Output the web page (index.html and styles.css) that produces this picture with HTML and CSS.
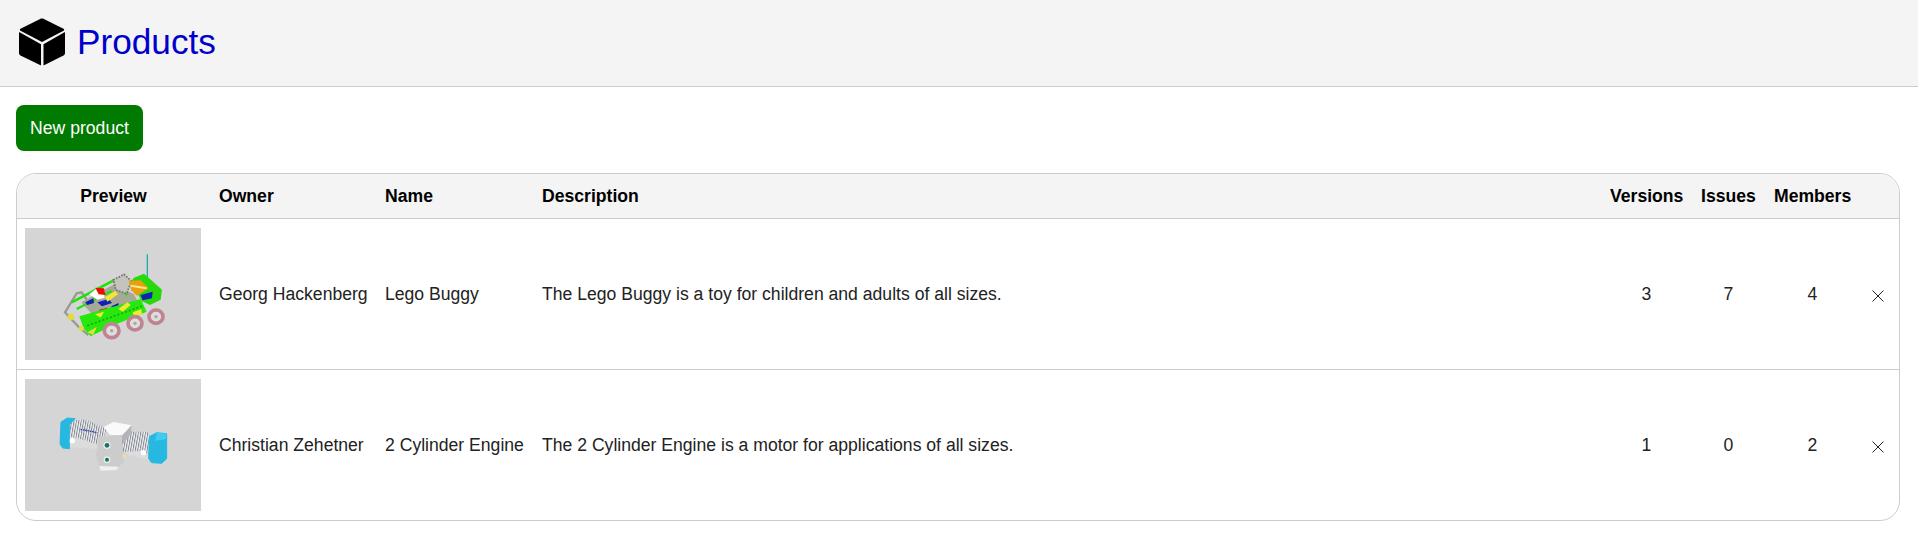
FILE: index.html
```html
<!DOCTYPE html>
<html lang="en">
<head>
<meta charset="utf-8">
<title>Products</title>
<link rel="stylesheet" href="styles.css">
</head>
<body>
<svg class="defs" width="0" height="0" aria-hidden="true">
  <defs>
    <filter id="soft" x="-5%" y="-5%" width="110%" height="110%"><feGaussianBlur stdDeviation="1.5"/></filter>
    <pattern id="coil" width="7" height="7" patternUnits="userSpaceOnUse" patternTransform="rotate(10)">
      <rect width="7" height="7" fill="#f2f3f5"/>
      <rect width="3" height="7" fill="#7e838e"/>
    </pattern>
  </defs>
</svg>
<header class="top">
  <svg class="cube" viewBox="0 0 46 48">
    <path d="M21.600.8 1.500 10.800c-.9.5-.9 1.500 0 2L23 24l21.500-11.200c.9-.5.9-1.500 0-2L24.400.8c-.9-.4-1.900-.4-2.800 0Z"/>
    <path d="M0 14.700V35c0 1.100.6 2 1.500 2.500l20 9.800c.3.100.5 0 .5-.3V26.300L.6 14.300c-.3-.1-.6 0-.6.400Z"/>
    <path d="M46 14.700V35c0 1.100-.6 2-1.500 2.500l-19.500 9.800c-.3.100-.5 0-.5-.3V26.300l21-12c.3-.1.500 0 .5.400Z"/>
  </svg>
  <h1 class="title">Products</h1>
</header>
<main class="content">
  <button class="primary" type="button">New product</button>
  <div class="panel">
    <table class="grid">
      <thead>
        <tr>
          <th class="c-preview center">Preview</th>
          <th class="c-owner">Owner</th>
          <th class="c-name">Name</th>
          <th>Description</th>
          <th class="c-versions center">Versions</th>
          <th class="c-issues center">Issues</th>
          <th class="c-members center">Members</th>
          <th class="c-del"></th>
        </tr>
      </thead>
      <tbody>
        <tr>
          <td class="c-preview">
            <svg class="thumb" viewBox="45 39 528 396">
              <rect x="45" y="39" width="528" height="396" fill="#d5d5d5"/>
              <g filter="url(#soft)">
                <path d="M412 118V195" stroke="#28a8b0" stroke-width="4" fill="none"/>
                <path d="M165 292 200 235 215 232 255 290 232 358 205 335Z" fill="none" stroke="#9a9a92" stroke-width="7"/>
                <path d="M214 262 312 208 372 238 395 285 262 316Z" fill="#a8a898"/>
                <path d="M185 262 310 197 352 240" fill="none" stroke="#20e010" stroke-width="8"/>
                <path d="M200 282 305 228" fill="none" stroke="#20e010" stroke-width="6"/>
                <path d="M310 195 342 178 364 198 350 236 318 225Z" fill="#c4c4bc" stroke="#70706a" stroke-width="5" stroke-dasharray="5 4"/>
                <path d="M372 188 402 176 456 224 452 254 420 270 395 258 362 200Z" fill="#28d810"/>
                <path d="M356 197 392 196 416 220 380 242 364 226Z" fill="#e8a010"/>
                <path d="M362 212 410 220" stroke="#f8e890" stroke-width="6"/>
                <path d="M392 240 428 230 426 250 398 256Z" fill="#1020b0"/>
                <path d="M238 238 258 222 282 226 284 248 262 254Z" fill="#fff"/>
                <path d="M256 218 282 220 286 240 266 238Z" fill="#f01000"/>
                <path d="M226 262 250 250 252 264 232 270Z" fill="#0820b8"/>
                <path d="M262 262 296 252 306 264 276 274Z" fill="#0820b8"/>
                <path d="M304 274 326 264 324 282 310 284Z" fill="#0820b8"/>
                <path d="M285 246 316 228 324 238 292 260Z" fill="#f0e830"/>
                <path d="M268 284 292 278 288 300 262 308Z" fill="#c03010"/>
                <path d="M208 304 392 252 410 290 300 335 242 364 222 342Z" fill="#28e810"/>
                <path d="M232 332 400 272" stroke="#18a810" stroke-width="5" stroke-dasharray="6 6"/>
                <path d="M325 282 352 262 362 270 338 290Z" fill="#f0e830"/>
                <path d="M368 292 394 282 396 298 372 304Z" fill="#f0e830"/>
                <circle cx="183" cy="306" r="10" fill="#e0dc40"/>
                <circle cx="214" cy="340" r="8" fill="#e0dc40"/>
                <path d="M232 352 260 336 250 360Z" fill="#e0dc40"/>
                <path d="M255 298 282 290 272 308Z" fill="#f0e830"/>
                <g fill="#e0dcdc" stroke="#c08490" stroke-width="11">
                  <ellipse cx="305" cy="347" rx="22" ry="21"/>
                  <ellipse cx="375" cy="325" rx="21" ry="20"/>
                  <ellipse cx="438" cy="305" rx="21" ry="20"/>
                </g>
                <g fill="#a0a8a8">
                  <circle cx="305" cy="347" r="5"/>
                  <circle cx="375" cy="325" r="5"/>
                  <circle cx="438" cy="305" r="5"/>
                </g>
              </g>
            </svg>
          </td>
          <td>Georg Hackenberg</td>
          <td>Lego Buggy</td>
          <td>The Lego Buggy is a toy for children and adults of all sizes.</td>
          <td class="center">3</td>
          <td class="center">7</td>
          <td class="center">4</td>
          <td class="c-del">
            <svg class="close" viewBox="0 0 12 12"><path d="M.5.500l11 11M11.500.500l-11 11"/></svg>
          </td>
        </tr>
        <tr>
          <td class="c-preview">
            <svg class="thumb" viewBox="45 41 528 396">
              <rect x="45" y="41" width="528" height="396" fill="#d5d5d5"/>
              <g filter="url(#soft)">
                <path d="M172 168 225 162 290 190 270 250 178 244Z" fill="url(#coil)"/>
                <path d="M325 198 418 200 418 274 330 262Z" fill="url(#coil)"/>
                <path d="M212 192 262 202" stroke="#1828a8" stroke-width="4" stroke-dasharray="4 3"/>
                <path d="M175 212 215 222 268 240 268 252 178 246Z" fill="#dcdcdc"/>
                <path d="M340 260 400 256 418 270 416 284 355 270Z" fill="#dcdcdc"/>
                <path d="M153 170 172 158 195 160 178 178 178 250 158 248 150 236Z" fill="#28b8e0" stroke="#28b8e0" stroke-width="3" stroke-linejoin="round"/>
                <path d="M418 214 440 202 470 205 470 280 455 294 425 292 416 280Z" fill="#28b8e0" stroke="#28b8e0" stroke-width="3" stroke-linejoin="round"/>
                <path d="M440 202 470 205 468 222 436 226Z" fill="#40ccf0"/>
                <path d="M280 186 310 170 365 180 335 212 300 208Z" fill="#fafafa"/>
                <path d="M335 212 365 180 362 205 340 235Z" fill="#b4b4b4"/>
                <path d="M265 215 335 208 342 290 320 312 272 314 258 270Z" fill="#cccccc"/>
                <path d="M272 316 320 314 326 304 268 302Z" fill="#f0f0f0"/>
                <circle cx="291" cy="240" r="11" fill="#ececec"/>
                <circle cx="291" cy="240" r="7" fill="#107868"/>
                <circle cx="291" cy="283" r="10" fill="#ececec"/>
                <circle cx="291" cy="283" r="6" fill="#107868"/>
                <circle cx="187" cy="226" r="8" fill="#fff"/>
                <circle cx="400" cy="262" r="8" fill="#fff"/>
                <circle cx="342" cy="272" r="6" fill="#e8dca0"/>
              </g>
            </svg>
          </td>
          <td>Christian Zehetner</td>
          <td>2 Cylinder Engine</td>
          <td>The 2 Cylinder Engine is a motor for applications of all sizes.</td>
          <td class="center">1</td>
          <td class="center">0</td>
          <td class="center">2</td>
          <td class="c-del">
            <svg class="close" viewBox="0 0 12 12"><path d="M.5.500l11 11M11.500.500l-11 11"/></svg>
          </td>
        </tr>
      </tbody>
    </table>
  </div>
</main>
</body>
</html>
```
FILE: styles.css
```css
* { box-sizing: border-box; }
html, body { margin: 0; padding: 0; background: #fff; }
body { font-family: "Liberation Sans", Arial, sans-serif; font-size: 17.6px; color: #222; }
.defs { position: absolute; }

.top {
  display: flex;
  align-items: center;
  gap: 12px;
  height: 87px;
  padding: 0 19px 2px;
  background: #f4f4f4;
  border-bottom: 1px solid #ccc;
}
.cube { width: 46px; height: 48px; fill: #000; flex: none; }
.title { margin: 0; font-size: 35.2px; font-weight: 400; color: #0000cc; }

.content { padding: 18px 0 0 16px; }
.primary {
  display: block;
  width: 127px;
  height: 46px;
  padding: 0;
  border: 0;
  border-radius: 8px;
  background: #007a00;
  color: #fff;
  font: 17.6px "Liberation Sans", Arial, sans-serif;
}

.panel {
  width: 1884px;
  margin-top: 22px;
  border: 1px solid #ccc;
  border-radius: 20px;
  overflow: hidden;
}
.grid { width: 100%; border-collapse: separate; border-spacing: 0; table-layout: fixed; }
.grid th {
  height: 45px;
  padding: 0 9px;
  background: #f4f4f4;
  border-bottom: 1px solid #ccc;
  color: #000;
  font-weight: 700;
  text-align: left;
  white-space: nowrap;
}
.grid td { height: 151px; padding: 0 9px; border-bottom: 1px solid #ccc; white-space: nowrap; }
.grid tbody tr:last-child td { border-bottom: 0; height: 150px; }
.grid .center { text-align: center; }
.grid .c-preview { width: 193px; padding: 0 8px; }
.c-owner { width: 166px; }
.c-name { width: 157px; }
.c-versions { width: 91px; }
.c-issues { width: 73px; }
.c-members { width: 95px; }
.grid .c-del { width: 39px; padding: 3px 0 0 12px; }
.thumb { display: block; width: 176px; height: 132px; }
.close { display: block; width: 12px; height: 12px; }
.close path { stroke: #222; stroke-width: 1; fill: none; }
```
